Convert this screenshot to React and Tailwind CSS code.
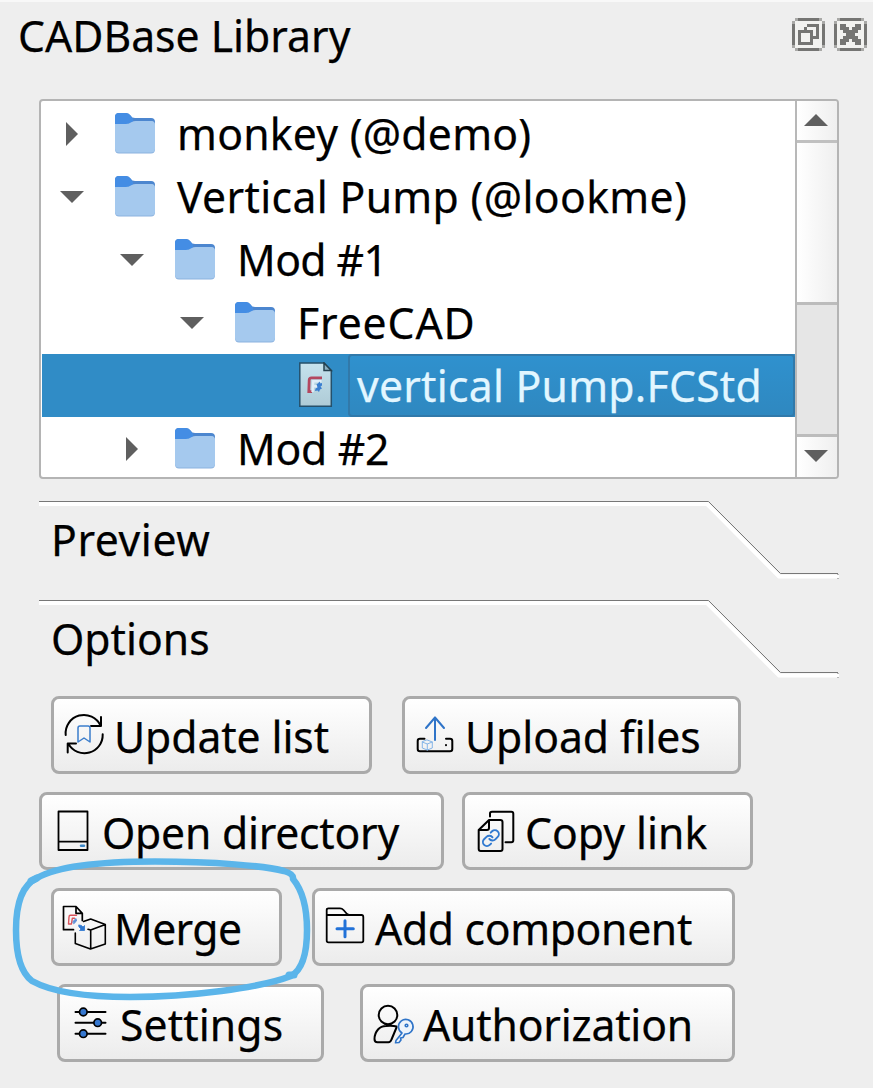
import React from "react"
import clsx from "clsx"

const tree = [
  { name: "monkey (@demo)", indent: "pl-[18px]", state: "closed", tracking: "tracking-[0.25px]" },
  { name: "Vertical Pump (@lookme)", indent: "pl-[18px]", state: "open", tracking: "tracking-[0.35px]" },
  { name: "Mod #1", indent: "pl-[78px]", state: "open", tracking: "tracking-[-0.6px]" },
  { name: "FreeCAD", indent: "pl-[138px]", state: "open", tracking: "tracking-[0.9px]" },
  { name: "vertical Pump.FCStd", file: true, tracking: "tracking-[0.25px]" },
  { name: "Mod #2", indent: "pl-[78px]", state: "closed", tracking: "tracking-[-0.3px]" }
]

function Label({ children, className }) {
  return (
    <span
      className={clsx(
        "inline-block shrink-0 origin-left scale-x-[0.97] whitespace-nowrap [-webkit-text-stroke:0.25px]",
        className
      )}
    >
      {children}
    </span>
  )
}

function Triangle({ direction }) {
  const points = {
    open: "0,6 24,6 12,18",
    closed: "6,0 18,12 6,24",
    up: "0,18 24,18 12,6"
  }
  return (
    <svg className="size-6 shrink-0" viewBox="0 0 24 24" fill="#5f5f5f">
      <polygon points={points[direction]} />
    </svg>
  )
}

function FolderIcon() {
  return (
    <svg className="h-[41px] w-10 shrink-0" viewBox="0 0 40 41">
      <path d="M0 4Q0 0 4 0H11Q14 0 15.500 2.500Q17 5 20 5H36Q40 5 40 9V20H0Z" fill="#4c86cf" />
      <path d="M0 4Q0 0 4 0H11Q14 0 15.500 2.500Q17 5 18 6V12H0Z" fill="#448de4" />
      <path d="M0 11H11Q14 11 16 9.500T21 8H36Q40 8 40 12V36Q40 40.500 36 40.500H4Q0 40.500 0 36Z" fill="#8bb2df" />
      <path d="M0 11H11Q14 11 16 9.500T21 8H36Q40 8 40 12V35.500Q40 39.500 36 39.500H4Q0 39.500 0 35.500Z" fill="#a5c9ee" />
    </svg>
  )
}

function FileIcon() {
  return (
    <svg className="h-[46px] w-[34px] shrink-0" viewBox="0 0 34 46">
      <defs>
        <linearGradient id="page" x1="0" y1="0" x2="0" y2="1">
          <stop offset="0" stopColor="#c5e2ee" />
          <stop offset="1" stopColor="#aecbd6" />
        </linearGradient>
      </defs>
      <path d="M.8 1H25L32.300 8.500V44.200H.8Z" fill="url(#page)" stroke="#25506b" strokeWidth="1.500" />
      <path d="M25 1V8.500H32.300Z" fill="#8bb0c2" stroke="#25414f" strokeWidth="1.500" />
      <path d="M23 15.800H12.500Q10.300 15.800 10.200 18L9.800 29.700H13" fill="none" stroke="#b3475f" strokeWidth="2.800" />
      <path d="M13.500 30L14.300 19.300H22.500M14 24.300H19" fill="none" stroke="#e0eef8" strokeWidth="2.400" />
      <path d="M17.500 22L19 21.500L20.500 19.500L21.500 21.500L23 21V23.500L21.500 24.500L23 26.500L21 27.500L20 30L18.500 28.500L16 29L16.500 26.500L18.500 25.500Z" fill="#3b7fd0" />
    </svg>
  )
}

function TreeRow({ item }) {
  if (item.file) {
    return (
      <li className="flex h-[63px] shrink-0 items-center bg-[#308cc6] pl-[257px] text-[#e2f6ff]">
        <div className="-mt-0.5">
          <FileIcon />
        </div>
        <div className="ml-[15px] flex h-[63px] flex-1 items-center rounded-sm border-2 border-[#3179aa] bg-linear-to-b from-[#2f91ce] to-[#2f88c0] pl-[7px]">
          <Label className={item.tracking}>{item.name}</Label>
        </div>
      </li>
    )
  }
  return (
    <li className={clsx("flex h-[63px] shrink-0 items-center", item.indent)}>
      <Triangle direction={item.state} />
      <div className="-mt-px ml-[31px] mr-[22px]">
        <FolderIcon />
      </div>
      <Label className={item.tracking}>{item.name}</Label>
    </li>
  )
}

function ScrollBar() {
  return (
    <div className="flex w-[42px] shrink-0 flex-col border-l-2 border-[#b8b8b8] bg-linear-to-r from-white to-[#efefef]">
      <div className="flex h-[42px] justify-center border-b-3 border-[#c0c0c0] pr-0.5 pt-[7px]">
        <Triangle direction="up" />
      </div>
      <div className="h-[159px]" />
      <div className="h-[135px] border-y-3 border-[#bcbcbc] bg-[#e6e6e6]" />
      <div className="flex flex-1 items-center justify-center pb-0.5 pr-0.5">
        <Triangle direction="open" />
      </div>
    </div>
  )
}

function DockButton({ children }) {
  return (
    <button type="button" className="size-[33px]">
      <svg viewBox="0 0 11 11" shapeRendering="crispEdges" fill="#757573">
        <path d="M1 1H10V10H1Z" fill="#f2f2f0" />
        <path d="M1 0H10V1H1ZM1 10H10V11H1ZM0 1H1V10H0ZM10 1H11V10H10Z" />
        <path d="M0 1H1V2H0ZM1 0H2V1H1ZM9 0H10V1H9ZM10 1H11V2H10ZM0 9H1V10H0ZM1 10H2V11H1ZM9 10H10V11H9ZM10 9H11V10H10Z" fill="#a9a9a7" />
        {children}
      </svg>
    </button>
  )
}

function SectionHeader({ title, tracking }) {
  return (
    <div className="relative h-[99px] w-[800px]">
      <svg className="absolute left-0 top-0" width="800" height="80" viewBox="0 0 800 80" fill="none">
        <path d="M0 3H668L740 75.500H800" stroke="#fff" strokeWidth="4" />
        <path d="M0 .5H669.500L741.500 72.500H799" stroke="#777" />
        <path d="M799 73V78" stroke="#777" strokeDasharray="1 3" />
      </svg>
      <h2 className="relative pl-3 pt-[7px] leading-[63px]">
        <Label className={tracking}>{title}</Label>
      </h2>
    </div>
  )
}

function Icon({ children }) {
  return (
    <svg
      className="size-12 shrink-0"
      viewBox="0 0 48 48"
      fill="none"
      stroke="#000"
      strokeWidth="2"
      strokeLinecap="round"
      strokeLinejoin="round"
    >
      {children}
    </svg>
  )
}

function OptionButton({ label, width, icon, tracking }) {
  return (
    <button
      type="button"
      className={clsx(
        "flex h-[78px] items-center gap-1 rounded-lg border-3 border-[#aaa] bg-linear-to-b from-white to-[#ececec] pl-2",
        width
      )}
    >
      <Icon>{icon}</Icon>
      <Label className={clsx("pt-0.5", tracking)}>{label}</Label>
    </button>
  )
}

const updateIcon = (
  <>
    <path d="M3.700 24A18.300 18.300 0 0 1 38.500 14.500M39 6V15H29M40.700 23.300A18.300 18.300 0 0 1 6.500 33M5.700 41.500V32.500H14" />
    <path d="M16 31V17Q16 15 18 15H26Q28 15 28 17V31L22 27Z" stroke="#3b7dcc" strokeWidth="1.500" />
  </>
)

const uploadIcon = (
  <>
    <path d="M22 29V6.500M13 17L22 6.500L31 17" stroke="#2f74c8" />
    <path d="M11.500 27.700H7Q4.700 27.700 4.700 30V38Q4.700 40.300 7 40.300H37Q39.300 40.300 39.300 38V30Q39.300 27.700 37 27.700H33M33 34V34.200" />
    <path d="M14.300 29L19.300 31V37L14.300 39L9.300 37V31ZM9.300 31L14.300 33L19.300 31M14.300 33V39" stroke="#86b6e8" strokeWidth="1" />
  </>
)

const directoryIcon = (
  <>
    <path d="M8.500 4.500H37.500V43H8.500ZM8.500 34.700H37.500" strokeWidth="1.800" />
    <path d="M31 38.700H34" stroke="#3b87c8" strokeWidth="2.400" />
  </>
)

const copyIcon = (
  <>
    <path d="M17 9.500V6.500Q17 4.700 19 4.700H38.300Q40.300 4.700 40.300 6.700V33.300Q40.300 35.300 38.300 35.300H32.500" />
    <path d="M16 13H27.300Q29.500 13 29.500 15V42Q29.500 44 27.500 44H7.700Q5.700 44 5.700 42V23ZM16 13V21Q16 23 14 23H5.700" />
    <g transform="translate(8.300 21.500) scale(.8)" stroke="#3079d0" strokeWidth="2.400">
      <path d="M10 13a5 5 0 0 0 7.540.54l3-3a5 5 0 0 0-7.070-7.070l-1.720 1.710" />
      <path d="M14 11a5 5 0 0 0-7.540-.54l-3 3a5 5 0 0 0 7.070 7.070l1.710-1.710" />
    </g>
  </>
)

const mergeIcon = (
  <>
    <path d="M11.500 26.700H1.500V3.500H14L20.300 10.300V17.500M14 3.500V10.300H20.300" strokeWidth="1.700" />
    <path d="M14.500 12.300H8.500Q7 12.300 7 14L6.500 21H9.500L10.300 15.300H12.500" stroke="#d9545c" strokeWidth="1.400" />
    <path d="M11 18.500L14 15.500L14.500 18L12 20.500Z" fill="#5d8fd6" stroke="#5d8fd6" strokeWidth="1" />
    <path d="M17 22L19.500 22.500L21 24L22.500 22.500V27.500H17.500L19 26L17 24Z" fill="#2f78d0" stroke="#2f78d0" strokeWidth=".8" />
    <path d="M21.500 18.500L28.700 16L43.300 21.500V41L28.500 46L13.300 40.500V30M43.300 21.500L28.700 27L26 26.200M28.700 27V46" strokeWidth="1.600" />
  </>
)

const addIcon = (
  <>
    <path d="M3.700 12V7Q3.700 5.300 5.500 5.300H17Q19 5.300 20.500 7L24 11Q25 12 26.500 12H38.500Q40.300 12 40.300 14V37.500Q40.300 39.300 38.500 39.300H5.500Q3.700 39.300 3.700 37.500V12H26" strokeWidth="1.800" />
    <path d="M14 25.700H30.300M22 17.700V33.700" stroke="#2272d8" strokeWidth="3" />
  </>
)

const settingsIcon = (
  <>
    <path d="M7.500 13H37.500M7.500 23.700H37.500M7.500 34.700H37.500" />
    <g fill="#3577cf" strokeWidth="1.700">
      <circle cx="15.300" cy="13" r="3.800" />
      <circle cx="29.700" cy="23.700" r="3.800" />
      <circle cx="15.300" cy="34.700" r="3.800" />
    </g>
  </>
)

const authIcon = (
  <>
    <circle cx="17" cy="16" r="9.300" />
    <path d="M25.500 27.500Q22 26.500 15 27Q10 27 7 30.500Q3.500 34.500 3.500 40Q3.500 43.300 6.500 43.300H17.500Q19.500 43.300 20.500 40.500L25.500 28.500Z" />
    <g stroke="#2f74c8" strokeWidth="1.600">
      <path d="M31 34L25 41.500L24.500 43.800L28 43.500L30 41L29.500 39L32 38.500L34 35A7.300 7.300 0 1 0 31 34Z" fill="#eef4fb" />
      <circle cx="35.500" cy="26.500" r="1.300" />
    </g>
  </>
)

export default function App() {
  return (
    <main className="relative flex h-[1088px] w-[873px] flex-col overflow-hidden border-t-2 border-[#f8f8f8] bg-[#eee] font-['Noto_Sans',sans-serif] text-[44px] leading-[63px] text-black">
      <header className="flex h-[97px] items-start justify-between pl-[18px] pr-1.5">
        <h1 className="pt-0.5">
          <Label>CADBase Library</Label>
        </h1>
        <div className="flex gap-[9px] pt-4">
          <DockButton>
            <path d="M5 2H9V7H7V6H8V3H5V4H4V3H5ZM2 4H7V9H2ZM3 5V8H6V5Z" fillRule="evenodd" />
          </DockButton>
          <DockButton>
            <path d="M2 2H4V3H5V4H6V3H7V2H9V4H8V5H7V6H8V7H9V9H7V8H6V7H5V8H4V9H2V7H3V6H4V5H3V4H2Z" />
          </DockButton>
        </div>
      </header>

      <section className="ml-[39px] flex h-[380px] w-[800px] shrink-0 overflow-hidden rounded-sm border-2 border-[#b4b4b4] bg-white">
        <ul className="flex flex-1 flex-col overflow-hidden pl-px pt-px">
          {tree.map((item) => (
            <TreeRow key={item.name} item={item} />
          ))}
        </ul>
        <ScrollBar />
      </section>

      <div className="ml-[39px] mt-[22px]">
        <SectionHeader title="Preview" tracking="tracking-[0.6px]" />
        <SectionHeader title="Options" />
      </div>

      <div className="-mt-[3px] flex flex-col gap-[18px]">
        <div className="flex gap-[30px] pl-[51px]">
          <OptionButton label="Update list" width="w-[321px]" icon={updateIcon} tracking="tracking-[-0.1px]" />
          <OptionButton label="Upload files" width="w-[339px]" icon={uploadIcon} tracking="tracking-[-0.1px]" />
        </div>
        <div className="flex gap-[18px] pl-[39px]">
          <OptionButton label="Open directory" width="w-[405px]" icon={directoryIcon} tracking="tracking-[-0.25px]" />
          <OptionButton label="Copy link" width="w-[291px]" icon={copyIcon} />
        </div>
        <div className="flex gap-[30px] pl-[51px]">
          <OptionButton label="Merge" width="w-[231px]" icon={mergeIcon} tracking="tracking-[-0.6px]" />
          <OptionButton label="Add component" width="w-[423px]" icon={addIcon} tracking="tracking-[-0.35px]" />
        </div>
        <div className="flex gap-9 pl-[57px]">
          <OptionButton label="Settings" width="w-[267px]" icon={settingsIcon} tracking="tracking-[0.1px]" />
          <OptionButton label="Authorization" width="w-[375px]" icon={authIcon} tracking="tracking-[-0.2px]" />
        </div>
      </div>

      {/* hand-drawn marker around Merge */}
      <svg
        className="pointer-events-none absolute left-0 top-[848px]"
        width="330"
        height="160"
        viewBox="0 0 330 160"
        fill="none"
        stroke="#5bb5ea"
        strokeWidth="6.500"
        strokeLinecap="round"
        strokeLinejoin="round"
      >
        <path d="M37 28C58 16 105 11.500 155 11.500C215 11.500 265 16 284 21Q294 24 293 29C303 41 307 60 307 80C307 104 302 120 291 126C260 138 190 147 130 147C82 147 50 141 32 131C20 122 16 102 16 80C16 53 22 35 37 28" />
        <path d="M37 28L31 31M289 125H294" strokeWidth="7" />
      </svg>
    </main>
  )
}
